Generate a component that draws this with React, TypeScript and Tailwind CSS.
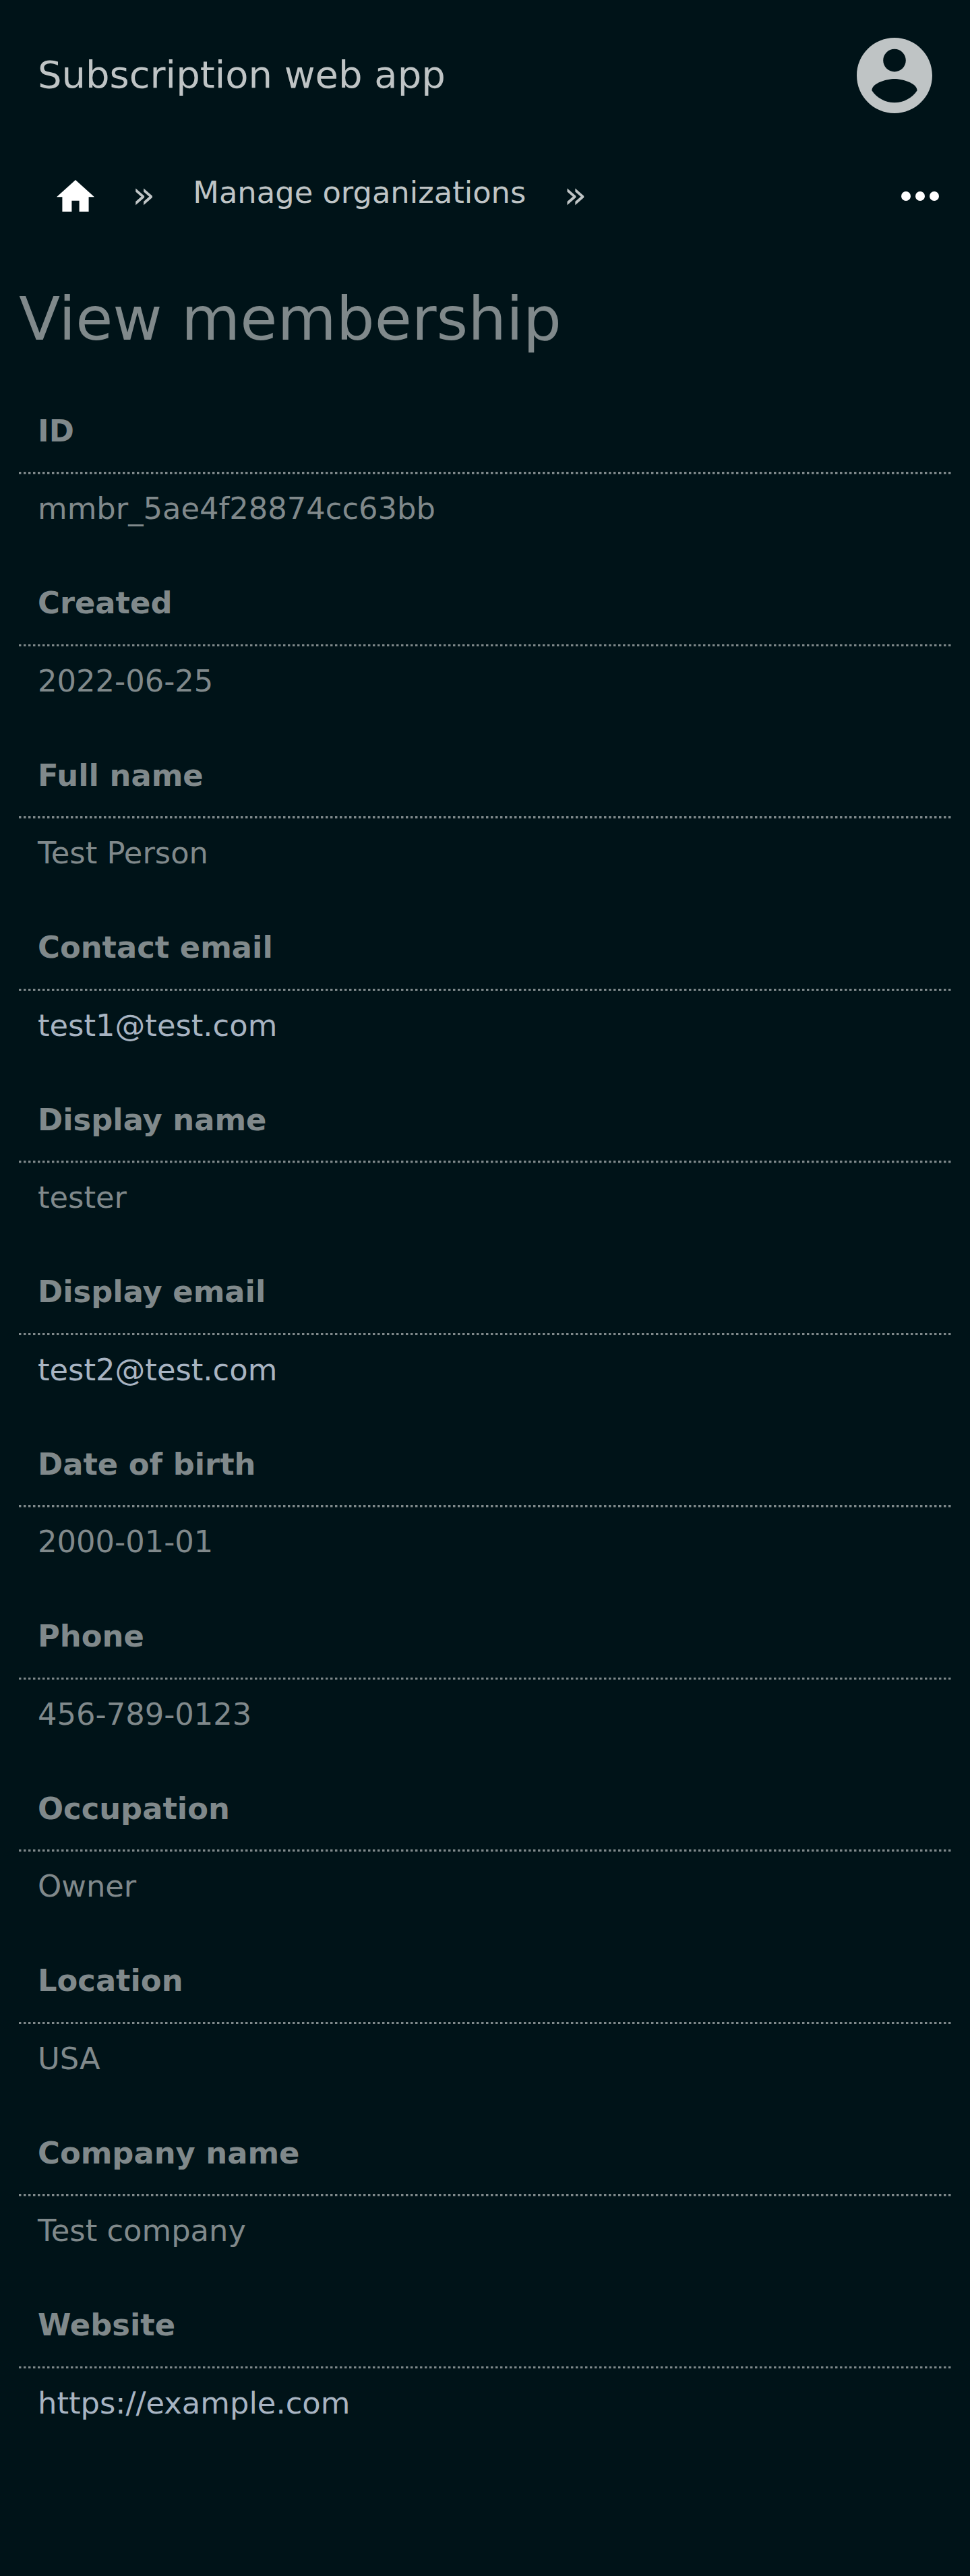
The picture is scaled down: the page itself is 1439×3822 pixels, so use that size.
type Field = { label: string; value: string; link?: boolean };

const fields: Field[] = [
  { label: "ID", value: "mmbr_5ae4f28874cc63bb" },
  { label: "Created", value: "2022-06-25" },
  { label: "Full name", value: "Test Person" },
  { label: "Contact email", value: "test1@test.com", link: true },
  { label: "Display name", value: "tester" },
  { label: "Display email", value: "test2@test.com", link: true },
  { label: "Date of birth", value: "2000-01-01" },
  { label: "Phone", value: "456-789-0123" },
  { label: "Occupation", value: "Owner" },
  { label: "Location", value: "USA" },
  { label: "Company name", value: "Test company" },
  { label: "Website", value: "https://example.com", link: true },
];

function Header() {
  return (
    <header className="flex h-[224px] items-center justify-between px-[56px]">
      <div className="pb-[3px] text-[56px] leading-[81px] text-[#bfc4c5]">Subscription web app</div>
      <svg viewBox="2 2 20 20" className="size-[112px] fill-[#bfc4c5]">
        <path d="M12 2C6.48 2 2 6.48 2 12s4.48 10 10 10 10-4.48 10-10S17.52 2 12 2zm0 3c1.66 0 3 1.34 3 3s-1.34 3-3 3-3-1.34-3-3 1.34-3 3-3zm0 14.2c-2.5 0-4.71-1.28-6-3.22.03-1.99 4-3.08 6-3.08 1.99 0 5.97 1.09 6 3.08-1.29 1.94-3.5 3.22-6 3.22z" />
      </svg>
    </header>
  );
}

function Separator() {
  return <span className="pt-[3px] text-[56px] leading-[67px]">»</span>;
}

function Breadcrumbs() {
  return (
    <nav className="flex h-[168px] items-start pt-[28px] pr-[46px] pl-[84px] text-[44.8px] leading-[67px] text-[#bfc4c5]">
      <svg viewBox="2 3 20 17" className="mt-[14.7px] mr-[56px] h-[47.6px] w-[56px] fill-white">
        <path d="M10 20v-6h4v6h5v-8h3L12 3 2 12h3v8z" />
      </svg>
      <Separator />
      <a className="mx-[56px]">Manage organizations</a>
      <Separator />
      <svg viewBox="0 0 56 14" className="mt-[31.5px] ml-auto h-[14px] w-[56px] fill-white">
        <circle cx="7" cy="7" r="7" />
        <circle cx="28" cy="7" r="7" />
        <circle cx="49" cy="7" r="7" />
      </svg>
    </nav>
  );
}

function DottedRule() {
  return (
    <div className="mx-[28px] h-[4px] bg-[linear-gradient(to_bottom,transparent_3px,#001318b0_3px),repeating-linear-gradient(to_right,#80898b_0px,#80898b_3px,#3a4a4e_3px,#3a4a4e_4px,transparent_4px,transparent_7px)] group-even:bg-[linear-gradient(to_bottom,transparent_3px,#001318_3px),repeating-linear-gradient(to_right,#80898b_0px,#80898b_3px,#3a4a4e_3px,#3a4a4e_4px,transparent_4px,transparent_7px)]" />
  );
}

export default function App() {
  return (
    <main className="h-[3822px] bg-[#001318] font-['DejaVu_Sans',sans-serif] text-[#80898b]">
      <Header />
      <Breadcrumbs />
      <h1 className="ml-[28px] pt-[14px] text-[89.6px] leading-[134px]">View membership</h1>
      <dl className="pt-[65.7px] text-[44.8px] leading-[67px]">
        {fields.map((f) => (
          <div key={f.label} className="group h-[255.5px]">
            <dt className="px-[56px] pb-[27.5px] font-bold">{f.label}</dt>
            <DottedRule />
            <dd className="px-[56px] pt-[17px]">
              {f.link ? <a className="text-[#a8b4c2]">{f.value}</a> : f.value}
            </dd>
          </div>
        ))}
      </dl>
    </main>
  );
}
